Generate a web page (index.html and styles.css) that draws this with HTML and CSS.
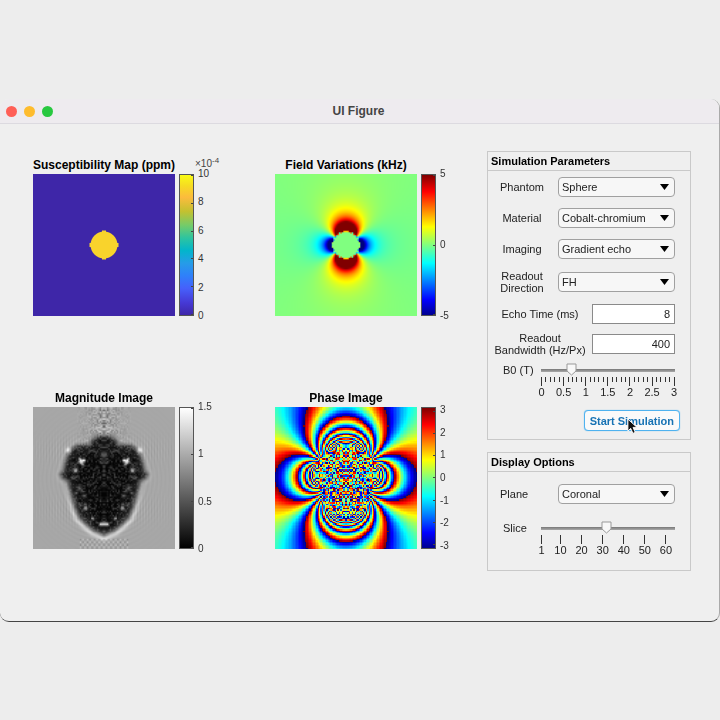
FILE: index.html
```html
<!DOCTYPE html>
<html lang="en">
<head>
<meta charset="utf-8">
<title>UI Figure</title>
<link rel="stylesheet" href="styles.css">
</head>
<body>
<main class="window">
  <header class="titlebar">
    <div class="lights"><span class="light red"></span><span class="light amber"></span><span class="light green"></span></div>
    <h1>UI Figure</h1>
  </header>
  <div class="content">
    <div class="plots">
      <figure class="plot">
        <figcaption>Susceptibility Map (ppm)</figcaption>
        <div class="exponent">×10<sup>-4</sup></div>
        <canvas id="susceptibility" width="284" height="284"></canvas>
        <div class="bar parula"><i></i><i></i><i></i><i></i><i></i><i></i></div>
        <div class="scale"><span>10</span><span>8</span><span>6</span><span>4</span><span>2</span><span>0</span></div>
      </figure>
      <figure class="plot">
        <figcaption>Field Variations (kHz)</figcaption>
        <canvas id="field" width="100" height="100"></canvas>
        <div class="bar jet"><i></i><i></i><i></i></div>
        <div class="scale"><span>5</span><span>0</span><span>-5</span></div>
      </figure>
      <figure class="plot">
        <figcaption>Magnitude Image</figcaption>
        <canvas id="magnitude" width="100" height="100"></canvas>
        <div class="bar gray"><i></i><i></i><i></i><i></i></div>
        <div class="scale"><span>1.5</span><span>1</span><span>0.5</span><span>0</span></div>
      </figure>
      <figure class="plot">
        <figcaption>Phase Image</figcaption>
        <canvas id="phase" class="crisp" width="100" height="100"></canvas>
        <div class="bar jet inset"><i></i><i></i><i></i><i></i><i></i><i></i><i></i></div>
        <div class="scale inset"><span>3</span><span>2</span><span>1</span><span>0</span><span>-1</span><span>-2</span><span>-3</span></div>
      </figure>
    </div>
    <form class="side">
      <section class="panel">
        <h2>Simulation Parameters</h2>
        <div class="fields">
          <div class="row"><label for="phantom">Phantom</label><div class="drop"><select id="phantom"><option>Sphere</option></select></div></div>
          <div class="row"><label for="material">Material</label><div class="drop"><select id="material"><option>Cobalt-chromium</option></select></div></div>
          <div class="row"><label for="imaging">Imaging</label><div class="drop"><select id="imaging"><option>Gradient echo</option></select></div></div>
          <div class="row"><label for="readout">Readout Direction</label><div class="drop"><select id="readout"><option>FH</option></select></div></div>
        </div>
        <div class="fields numbers">
          <div class="row wide"><label for="echo">Echo Time (ms)</label><input id="echo" type="text" inputmode="numeric" value="8"></div>
          <div class="row wide"><label for="bandwidth">Readout Bandwidth (Hz/Px)</label><input id="bandwidth" type="text" inputmode="numeric" value="400"></div>
        </div>
        <div class="slider">
          <label for="b0">B0 (T)</label>
          <div class="track">
            <input id="b0" type="range" min="0" max="3" step="0.01" value="0.68">
            <div class="ticks" id="b0-ticks"></div>
          </div>
        </div>
        <div class="actions">
          <button type="button">Start Simulation</button>
          <svg class="pointer" viewBox="0 0 12 18" aria-hidden="true"><path d="M1 1V14L4 11L6.500 16.500L9 15.400L6.600 10H11Z" fill="#111" stroke="#fff" stroke-width="1"/></svg>
        </div>
      </section>
      <section class="panel display">
        <h2>Display Options</h2>
        <div class="fields">
          <div class="row"><label for="plane" class="start">Plane</label><div class="drop"><select id="plane"><option>Coronal</option></select></div></div>
        </div>
        <div class="slider">
          <label for="slice">Slice</label>
          <div class="track">
            <input id="slice" type="range" min="1" max="64" value="32">
            <div class="ticks" id="slice-ticks"></div>
          </div>
        </div>
      </section>
    </form>
  </div>
</main>
<script src="plots.js"></script>
</body>
</html>
```

FILE: styles.css
```css
* { box-sizing: border-box; }

body {
  margin: 0;
  padding-top: 99px;
  min-height: 100vh;
  background: #ededed;
  color: #222;
  font: 11px/12px "Liberation Sans", Arial, sans-serif;
}

.window {
  background: #efefef;
  border-bottom: 1px solid #444;
  border-right: 1px solid #aaa;
  border-radius: 9px;
}

.titlebar {
  display: grid;
  grid-template-columns: 62px 1fr 64px;
  align-items: center;
  height: 25px;
  background: #eeebef;
  border-bottom: 1px solid #dcdae0;
  border-radius: 9px 9px 0 0;
}

.titlebar h1 {
  margin: 0;
  font-size: 12px;
  line-height: 16px;
  text-align: center;
  color: #444;
}

.lights { display: flex; gap: 7px; padding-left: 6px; }
.light { width: 11px; height: 11px; border-radius: 50%; }
.red { background: #ff5f57; }
.amber { background: #febc2e; }
.green { background: #28c840; }

.content {
  display: grid;
  grid-template-columns: minmax(0, 1fr) 204px;
  gap: 10px;
  padding: 27px 28px 50px 33px;
}

.plots {
  display: grid;
  grid-template-columns: 1fr 1fr;
  column-gap: 40px;
  row-gap: 75px;
  align-content: start;
  padding-top: 7px;
}

.plot {
  display: grid;
  grid-template-columns: minmax(0, 1fr) 15px 37px;
  grid-template-rows: 16px auto;
  column-gap: 4px;
  margin: 0;
}

.plot figcaption {
  justify-self: center;
  font-size: 12px;
  line-height: 15px;
  font-weight: bold;
  white-space: nowrap;
  color: #000;
}

.plot canvas {
  grid-column: 1;
  grid-row: 2;
  width: 100%;
  aspect-ratio: 1;
}

.crisp { image-rendering: pixelated; }

.exponent { grid-column: 2 / 4; padding-left: 16px; font-size: 10px; line-height: 12px; color: #444; }
.exponent sup { font-size: 8px; line-height: 0; }

.bar {
  grid-column: 2;
  grid-row: 2;
  display: flex;
  flex-direction: column;
  justify-content: space-between;
  align-items: flex-end;
  border: 1px solid #555;
}
.bar.inset { padding: 3px 0; }
.bar i { width: 2px; height: 1px; background: #444; }

.parula { background: linear-gradient(to top, #3e26a8, #463ad6 9%, #4660fb 19%, #2f80fa 28%, #269ce8 37%, #02b5cb 46%, #2dc4a0 55%, #74cb6a 64%, #c3c130 74%, #fcbb3d 84%, #f6da23 92%, #f9fb15); }
.jet { background: linear-gradient(to top, #00008f, #00f 11%, #0ff 37%, #ff0 63%, #f00 88%, #800000); }
.gray { background: linear-gradient(to top, #000, #fff); }

.scale {
  grid-column: 3;
  grid-row: 2;
  display: flex;
  flex-direction: column;
  justify-content: space-between;
  margin: -6px 0;
  font-size: 10px;
  line-height: 12px;
  color: #333;
}
.scale.inset { margin: -3px 0; }

.side { display: flex; flex-direction: column; gap: 12px; }

.panel { border: 1px solid #c9c9c9; padding-bottom: 8px; }
.display { padding-bottom: 12px; }

.panel h2 {
  margin: 0 0 6px;
  padding: 0 3px;
  font-size: 11px;
  line-height: 18px;
  color: #000;
  border-bottom: 1px solid #c9c9c9;
}
.display h2 { margin-bottom: 12px; }

.fields { display: flex; flex-direction: column; gap: 11px; padding: 0 15px 0 10px; }
.fields.numbers { gap: 8px; padding-left: 5px; margin-top: 10px; }

.row { display: grid; grid-template-columns: 48px 1fr; column-gap: 12px; align-items: center; }
.row.wide { grid-template-columns: 94px 1fr; column-gap: 5px; }
.row label { text-align: center; }
.row label.start { text-align: left; padding-left: 2px; }

.drop { position: relative; display: flex; }
.drop::after {
  content: "";
  position: absolute;
  right: 6px;
  top: 7px;
  width: 9px;
  height: 6px;
  background: #000;
  clip-path: polygon(0 0, 100% 0, 50% 100%);
  pointer-events: none;
}

select, input[type="text"] {
  width: 100%;
  height: 20px;
  margin: 0;
  padding: 0 4px;
  font: inherit;
  color: #222;
  background: #f7f7f7;
  border: 1px solid #a0a0a0;
  border-radius: 4px;
  appearance: none;
}
select { padding: 0 3px; }
input[type="text"] { text-align: right; background: #fff; border-color: #8a8a8a; border-radius: 0; }

.slider { display: grid; grid-template-columns: 38px 1fr; padding: 0 15px; margin-top: 7px; }
.slider label { line-height: 14px; }
.display .slider { margin-top: 17px; }

.track input {
  display: block;
  appearance: none;
  width: calc(100% + 10px);
  height: 13px;
  margin: 0 -5px;
  background: linear-gradient(#777, #aaa) 5px 6px / calc(100% - 10px) 3px no-repeat;
}
.track input::-webkit-slider-thumb {
  appearance: none;
  width: 11px;
  height: 13px;
  border: 0;
  background: url("data:image/svg+xml,%3Csvg xmlns='http://www.w3.org/2000/svg' viewBox='0 0 11 13'%3E%3Cpath d='M1 1H10V8L5.500 12L1 8Z' fill='%23f8f8f8' stroke='%23999'/%3E%3C/svg%3E") no-repeat;
}

.ticks { display: flex; justify-content: space-between; margin-top: 1px; height: 23px; font-size: 11px; line-height: 13px; }
.ticks span { display: flex; flex-direction: column; align-items: center; width: 1px; white-space: nowrap; }
.ticks span::before { content: ""; flex: none; width: 1px; height: 5px; background: #333; }
.ticks .major::before { height: 9px; }
.ticks .blank::before { visibility: hidden; }

.actions { position: relative; display: flex; justify-content: flex-end; padding-right: 10px; margin-top: 10px; }
button {
  height: 21px;
  padding: 0 5px;
  font: bold 11px/16px "Liberation Sans", Arial, sans-serif;
  color: #1873b4;
  background: #fafafa;
  border: 1px solid #4fb2ef;
  border-radius: 4px;
  box-shadow: 0 0 1px #4fb2ef;
}
.pointer { position: absolute; right: 52px; top: 8px; width: 11px; height: 17px; }
```

FILE: plots.js
```js
const N = 100;
const RADIUS = 9.5;

function jet(t) {
  const v = Math.max(0, Math.min(1, t)) * 4;
  const ch = c => 255 * Math.max(0, Math.min(1, 1.5 - Math.abs(v - c)));
  return [ch(3), ch(2), ch(1)];
}

function noise(x, y) {
  const s = Math.sin(x * 127.1 + y * 311.7) * 43758.5453;
  return s - Math.floor(s);
}

function paint(id, fn) {
  const ctx = document.getElementById(id).getContext('2d');
  const img = ctx.createImageData(N, N);
  for (let j = 0; j < N; j++) {
    for (let i = 0; i < N; i++) {
      const [r, g, b] = fn(i, j);
      img.data.set([r, g, b, 255], (j * N + i) * 4);
    }
  }
  ctx.putImageData(img, 0, 0);
}

// Dipole field outside a sphere whose poles lie on the vertical axis.
function dipole(x, y) {
  const r = Math.hypot(x, y) || 1;
  return (3 * y * y / (r * r) - 1) * Math.pow(RADIUS / r, 3);
}

// Contribution of the neighbours above and below.
function neighbours(x, y) {
  return dipole(x, y + N) + dipole(x, y - N);
}

// Susceptibility
{
  const ctx = document.getElementById('susceptibility').getContext('2d');
  ctx.fillStyle = '#3e26a8';
  ctx.fillRect(0, 0, 284, 284);
  ctx.fillStyle = '#f9d32c';
  ctx.beginPath();
  ctx.arc(142, 142, 27, 0, 2 * Math.PI);
  ctx.fill();
  ctx.fillRect(138, 113, 8, 58);
  ctx.fillRect(113, 138, 58, 8);
}

// Field
paint('field', (i, j) => {
  const x = i - 49.5, y = j - 49.5, r = Math.hypot(x, y);
  if (r < RADIUS - 0.4) return jet(0.5);
  let f = 13 * dipole(x, y);
  if (r < RADIUS + 0.3) f = (noise(Math.abs(x), Math.abs(y)) - 0.4) * 6;
  return jet(0.5 + f / 10);
});

// Phase, wrapped to one turn
paint('phase', (i, j) => {
  const x = i - 49.5, y = j - 49.5;
  const shifted = y - Math.max(-2, Math.min(2, 35 * dipole(x, y)));
  let p = 0.3 - 440 * dipole(x, shifted) - 110 * neighbours(x, shifted);
  const core = Math.hypot(x / 16, (j - 53) / 25);
  if (core < 1 + 0.2 * (noise(Math.abs(x), j) - 0.5)) p = noise(Math.abs(x) + 3, j) * 2 * Math.PI;
  const turn = p / (2 * Math.PI) + 0.5;
  return jet(turn - Math.floor(turn));
});

// Magnitude: outline of the signal void as half-widths per row
const outline = [[20, 0], [21, 5], [23, 8], [26, 10], [27, 19], [29, 22], [33, 25], [39, 27], [44, 28], [47, 30], [49, 29], [52, 25], [60, 23], [70, 20], [77, 17], [82, 12], [86, 7], [89, 0]];
function halfWidth(y) {
  for (let k = 1; k < outline.length; k++) {
    const [y0, w0] = outline[k - 1], [y1, w1] = outline[k];
    if (y >= y0 && y <= y1) return w0 + (w1 - w0) * (y - y0) / (y1 - y0);
  }
  return 0;
}
const points = [];
for (let y = 20; y <= 89; y += 0.25) points.push([halfWidth(y), y]);
const spots = [[16, 38, 1.5, 230], [14, 37, 1, 220], [17, 36, 1, 150], [20, 44, 1.5, 170], [15, 40, 1, 130], [13, 71, 1.3, 140], [13, 68, 1, 80], [0, 82, 1.2, 200], [2, 82, 1.2, 190], [8, 78, 0.8, 140], [25, 30, 1.8, 85], [17, 57, 1.7, 65], [14, 62, 1.4, 55], [0, 33, 2.5, 70], [0, 38, 2, 45], [5, 42, 1.2, 35], [17, 68, 1.2, 65], [22, 49, 1.2, 45], [11, 54, 1.2, 45], [20, 60, 1.2, 50]];
paint('magnitude', (i, j) => {
  const x = Math.abs(i - 49.5);
  let d = 1e9;
  for (const [px, py] of points) d = Math.min(d, Math.hypot(x - px, j - py));
  if (x < halfWidth(j)) d = -d;
  const out = Math.max(0, d);
  const edge = 1 / (1 + Math.exp(-(d - 0.1) / 1.1));
  let base = 167;
  const glow = 12 + 46 / (1 + Math.exp(-(j - 68) / 6));
  base += glow * Math.exp(-Math.pow((d - 3) / 1.6, 2));
  const band = Math.exp(-Math.pow((j - 30) / 9, 2)) + Math.exp(-Math.pow((j - 72) / 9, 2));
  base += 13 * band * Math.exp(-out / 22) * Math.cos(Math.PI * i);
  base += 6 * Math.exp(-out / 14) * Math.cos(Math.hypot(x, j - 50) * 2.1);
  if (x < 19 && j < 24) base += (noise(x, j) - 0.6) * 120 * Math.exp(-x / 9);
  if (x < 17 && j > 91) base += 30 * Math.cos(x * 1.9) * Math.cos((j - 91) * 1.7);
  const grain = noise(x + 11, j);
  const rim = Math.exp(-Math.pow((d + 5) / 4, 2));
  const dark = 4 + Math.pow(grain, 3) * 62 + rim * 20 * noise(Math.floor(x / 2) + 5, Math.floor(j / 2));
  let v = base * edge + dark * (1 - edge);
  for (const [sx, sy, s, a] of spots) v += a * Math.exp(-((x - sx) ** 2 + (j - sy) ** 2) / (s * s));
  return [v, v, v];
});

// Slider scales
function scale(id, count, label) {
  const box = document.getElementById(id);
  for (let n = 0; n < count; n++) {
    const tick = document.createElement('span');
    const text = label(n);
    if (text === false) tick.className = 'blank';
    else if (text !== '') {
      tick.className = 'major';
      tick.textContent = text;
    }
    box.append(tick);
  }
}
scale('b0-ticks', 31, n => n % 5 ? '' : String(n / 10));
scale('slice-ticks', 64, n => n === 0 || (n + 1) % 10 === 0 ? String(n + 1) : false);
```
